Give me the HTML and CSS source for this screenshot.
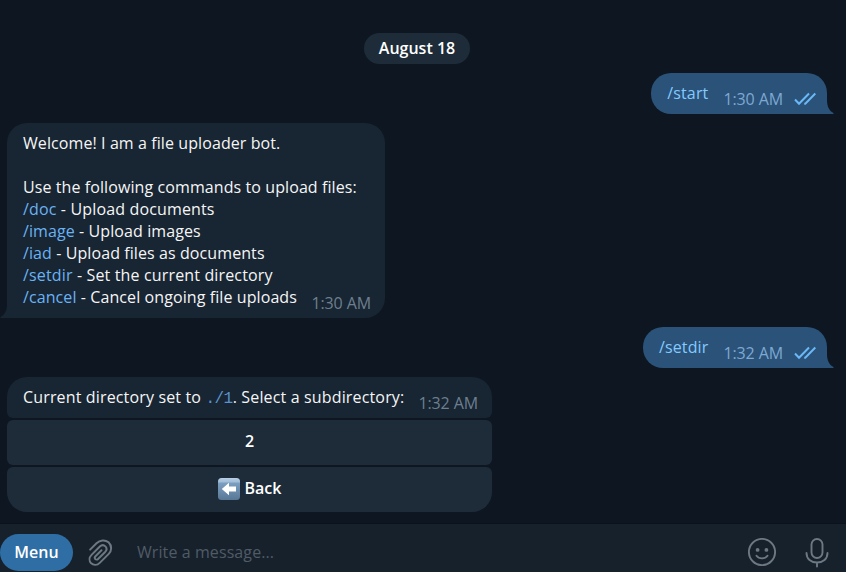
FILE: index.html
```html
<!DOCTYPE html>
<html lang="en">
<head>
<meta charset="utf-8">
<title>Chat</title>
<link rel="stylesheet" href="styles.css">
</head>
<body>
<main class="chat">
  <div class="date">August 18</div>

  <div class="bubble out">
    <span class="text"><span class="cmd">/start</span></span>
    <span class="time">1:30 AM</span>
    <svg class="checks" width="22" height="14" viewBox="0 0 22 14"><path d="M1 7.500L5 11.700L15 1.500M10.200 11.700L11.300 11.700L21.300 1.500"/></svg>
    <svg class="tail" width="7" height="14" viewBox="0 0 7 14"><path d="M0 0C0 6 2 11 6.500 13Q7 14 6 14H0Z"/></svg>
  </div>

  <div class="bubble in">
    <div class="text">Welcome! I am a file uploader bot.<br><br>Use the following commands to upload files:<br><span class="loose"><span class="cmd">/doc</span> - Upload documents</span><br><span class="cmd">/image</span> - Upload images<br><span class="cmd">/iad</span> - Upload files as documents<br><span class="loose"><span class="cmd">/setdir</span> - Set the current directory</span><br><span class="cmd">/cancel</span> - Cancel ongoing file uploads</div>
    <span class="time corner">1:30 AM</span>
    <svg class="tail left" width="7" height="14" viewBox="0 0 7 14"><path d="M0 0C0 6 2 11 6.500 13Q7 14 6 14H0Z"/></svg>
  </div>

  <div class="bubble out">
    <span class="text"><span class="cmd">/setdir</span></span>
    <span class="time">1:32 AM</span>
    <svg class="checks" width="22" height="14" viewBox="0 0 22 14"><path d="M1 7.500L5 11.700L15 1.500M10.200 11.700L11.300 11.700L21.300 1.500"/></svg>
    <svg class="tail" width="7" height="14" viewBox="0 0 7 14"><path d="M0 0C0 6 2 11 6.500 13Q7 14 6 14H0Z"/></svg>
  </div>

  <div class="keyboard-message">
    <div class="bubble in with-keys">
      <span class="text loose">Current directory set to <code>./1</code>. Select a subdirectory:</span>
      <span class="time corner">1:32 AM</span>
    </div>
    <div class="key">2</div>
    <div class="key last">
      <svg class="back" width="22" height="22" viewBox="0 0 22 22">
        <defs><linearGradient id="sky" x1="0" y1="0" x2="0" y2="1"><stop offset="0" stop-color="#b9cfe4"/><stop offset=".16" stop-color="#a4bfd9"/><stop offset=".25" stop-color="#7b9dbf"/><stop offset="1" stop-color="#587796"/></linearGradient></defs>
        <rect width="22" height="22" rx="3.500" fill="url(#sky)"/>
        <path d="M3.800 11L11 4.800V8.500H18V13.500H11V17.200Z" fill="#fff"/>
      </svg>
      <span>Back</span>
    </div>
  </div>
</main>

<footer class="composer">
  <div class="menu">Menu</div>
  <svg class="icon clip" width="27" height="29" viewBox="0 0 26 28"><path d="M2 10.300L8.200 4.100C11.500 .8 16.500 .5 19.800 3.200C23.200 6.500 23 11.200 20 14.300L11.300 23C8.800 25.400 5.300 25.600 3 23.500C.8 21.200 1 17.700 3.400 15.300L11.400 7.300C13.100 5.700 15.300 5.700 16.800 7.100C18.200 8.600 18.100 10.800 16.500 12.500L9.700 19.300C8.900 20.100 7.700 20.100 7 19.400C6.300 18.600 6.400 17.500 7.200 16.700L13 10.900"/></svg>
  <div class="placeholder">Write a message...</div>
  <svg class="icon smile" width="28" height="28" viewBox="0 0 28 28"><circle cx="14" cy="14" r="13.100"/><path d="M8.500 17.700C11 21.200 17 21.200 19.500 17.700"/><circle class="eye" cx="9.600" cy="11.900" r="1.900"/><circle class="eye" cx="18.400" cy="11.900" r="1.900"/></svg>
  <svg class="icon mic" width="24" height="30" viewBox="0 0 24 30"><rect x="6.500" y="1" width="11" height="19" rx="5.500"/><path d="M1.500 15C1.500 21 6 24.500 12 24.500S22.500 21 22.500 15M12 24.500V28.500"/></svg>
</footer>
</body>
</html>
```

FILE: styles.css
```css
* { box-sizing: border-box; }
body {
  margin: 0;
  height: 572px;
  overflow: hidden;
  display: flex;
  flex-direction: column;
  background: #0e1621;
  color: #f5f5f5;
  font: 16px/22px "Open Sans", sans-serif;
}
.chat {
  flex: 1;
  display: flex;
  flex-direction: column;
  align-items: flex-start;
  gap: 9px;
  padding: 33px 19px 0 7px;
}
.date {
  align-self: center;
  width: 106px;
  height: 31px;
  line-height: 30px;
  border-radius: 16px;
  background: #1e2c3a;
  color: #fff;
  font-weight: 600;
  text-align: center;
}
.bubble {
  position: relative;
  display: flex;
  height: 41px;
  padding: 9px 14px 0 16px;
  border-radius: 20px;
  white-space: nowrap;
}
.text { letter-spacing: .09px; }
.loose { letter-spacing: .15px; }
.time { margin: 6px 0 0 15px; color: #6d7f8f; letter-spacing: -.1px; }
.in { background: #182533; }
.in:not(.with-keys) { width: 378px; height: 195px; border-bottom-left-radius: 0; }
.cmd { color: #6ab3f3; }
.corner { position: absolute; right: 14px; bottom: 4px; margin: 0; }
.out {
  align-self: flex-end;
  padding-right: 11px;
  border-bottom-right-radius: 0;
  background: #2b5278;
}
.out .cmd { color: #83caff; letter-spacing: .12px; }
.out .time { color: #7da8d3; }
.checks { margin: 10px 0 0 11px; fill: none; stroke: #6ab8f7; stroke-width: 2; }
.tail { position: absolute; left: 100%; bottom: 0; fill: #2b5278; }
.tail.left { left: -7px; transform: scaleX(-1); fill: #182533; }
.keyboard-message { width: 485px; display: flex; flex-direction: column; gap: 2px; }
.with-keys { border-radius: 20px 20px 6px 6px; }
code { font: 16px/20px "Liberation Mono", monospace; letter-spacing: -.5px; color: #5a94ce; }
.key {
  height: 45px;
  display: flex;
  align-items: center;
  justify-content: center;
  gap: 5px;
  padding-bottom: 4px;
  border-radius: 6px;
  background: #1e2c3a;
  color: #fff;
  font-weight: 600;
}
.last { border-radius: 6px 6px 20px 20px; }
.back { position: relative; top: 1px; }
.composer {
  height: 49px;
  display: flex;
  align-items: flex-start;
  border-top: 1px solid #0b121b;
  background: #17212b;
}
.menu {
  width: 73px;
  height: 37px;
  margin-top: 10px;
  border-radius: 19px;
  background: #2f6ea5;
  color: #fff;
  font-weight: 600;
  line-height: 36px;
  text-align: center;
}
.icon { fill: none; stroke: #6c7883; stroke-width: 1.9; stroke-linecap: round; stroke-linejoin: round; }
.eye { fill: #6c7883; stroke: none; }
.clip { margin: 15px 0 0 15px; }
.placeholder { flex: 1; margin: 17px 0 0 22px; color: #4f5b67; letter-spacing: .09px; }
.smile { margin-top: 14px; }
.mic { margin: 14px 17px 0 29px; }
```
